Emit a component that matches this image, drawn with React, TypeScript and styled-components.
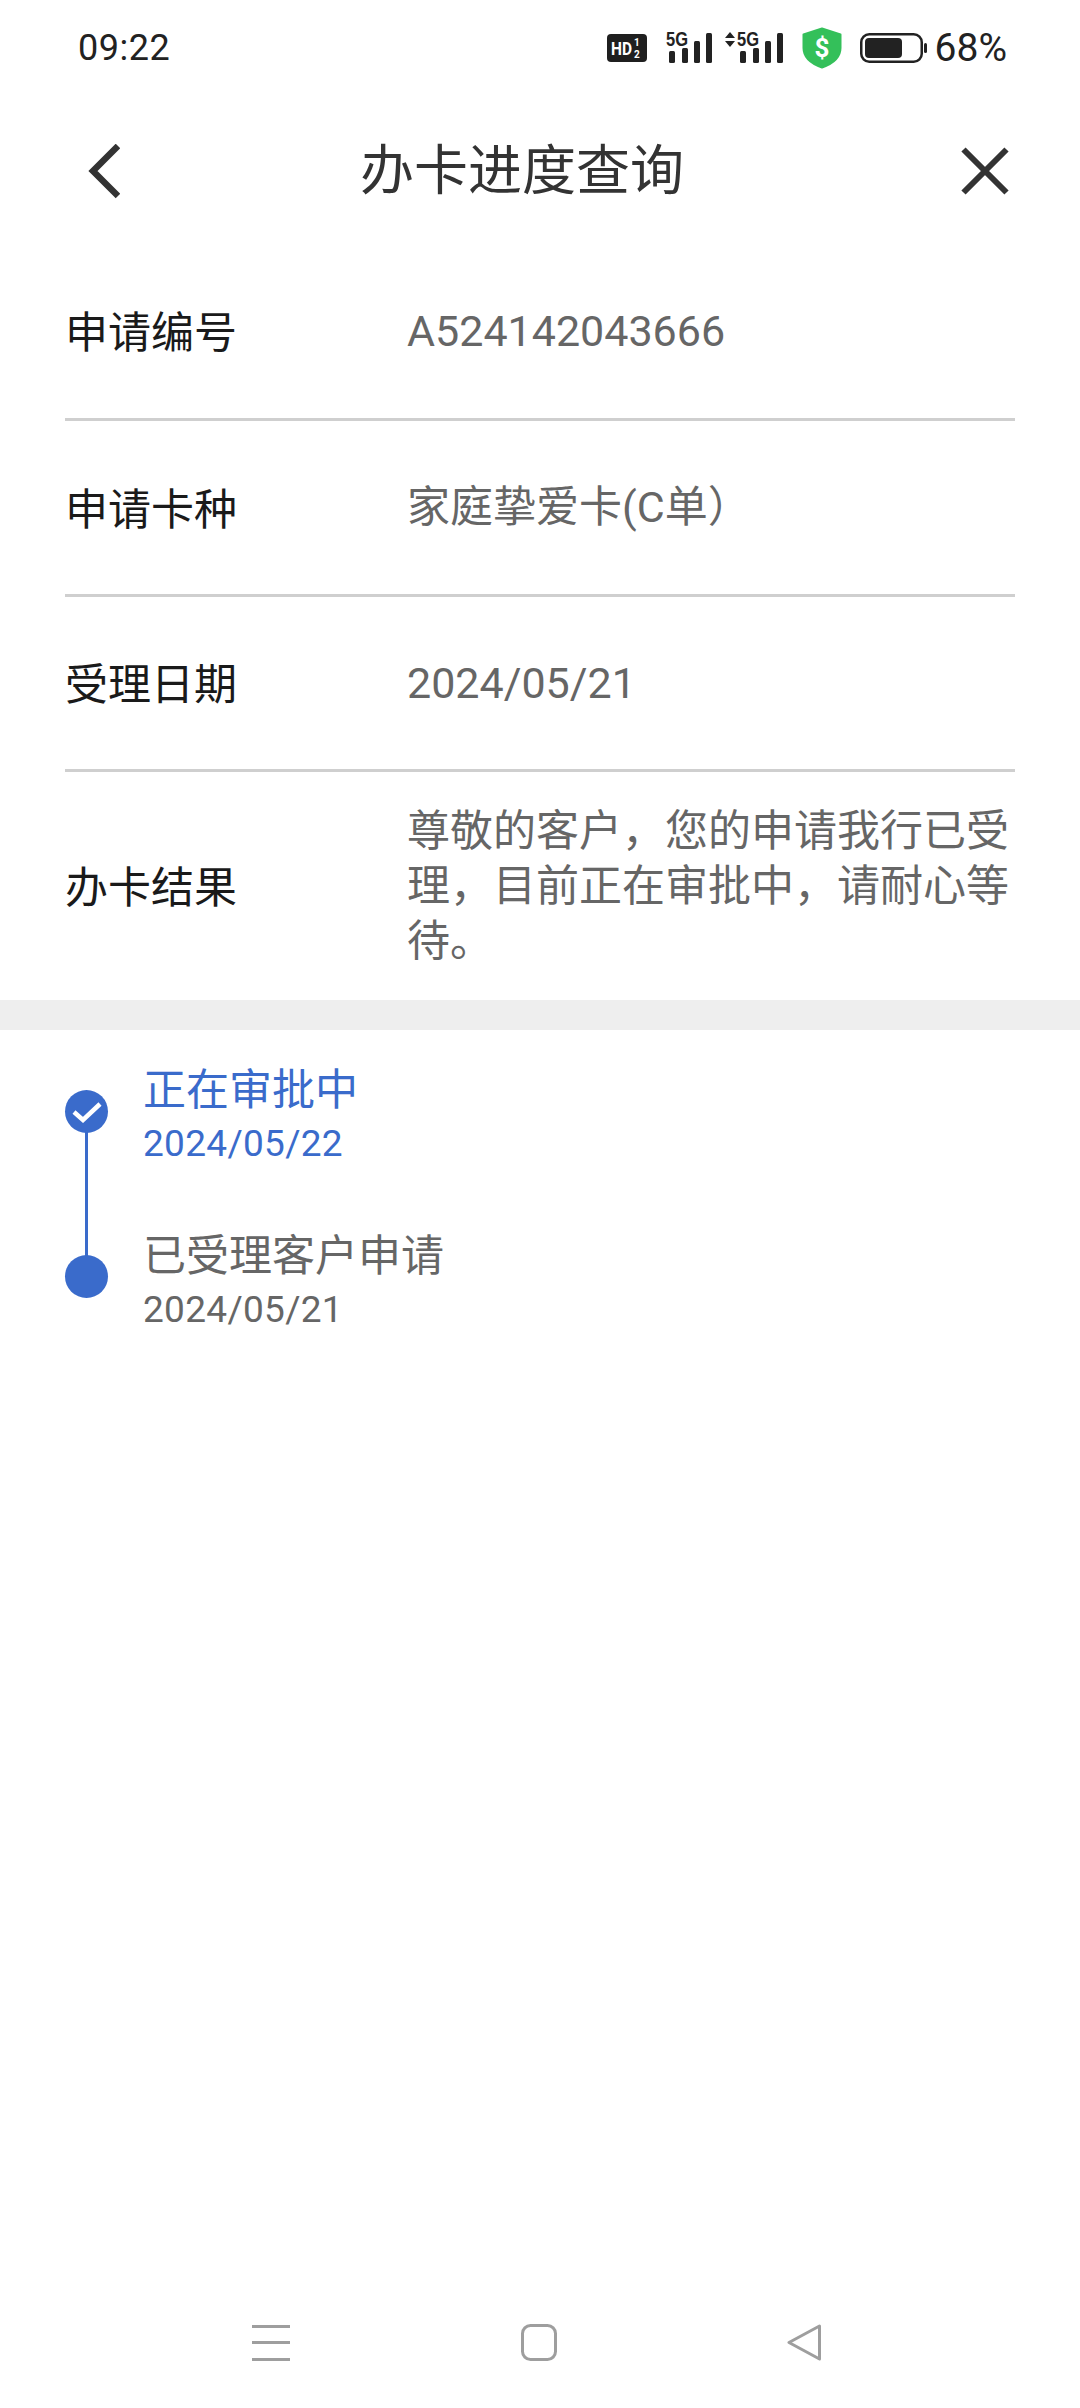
import React from "react";
import styled, { createGlobalStyle } from "styled-components";

const Global = createGlobalStyle`
  html, body { margin: 0; padding: 0; background: #fff; }
  body { font-family: Roboto, "Noto Sans CJK SC", sans-serif; }
`;

const Screen = styled.div`
  width: 1080px;
  height: 2408px;
  background: #fff;
  display: flex;
  flex-direction: column;
  overflow: hidden;
`;

const StatusBar = styled.div`
  height: 96px;
  padding: 0 73px 0 78px;
  display: flex;
  align-items: center;
  justify-content: space-between;
  box-sizing: border-box;
`;

const Clock = styled.span`
  font-size: 36px;
  color: #222;
  letter-spacing: 0.5px;
`;

const StatusIcons = styled.div`
  display: flex;
  align-items: center;
`;

const StatusText = styled.span`
  font-size: 39px;
  color: #222;
  margin-left: 8px;
`;

const SignalSvg = styled.svg<{ $gap: number }>`
  margin-left: ${(p) => p.$gap}px;
  flex: none;
`;

const ShieldSvg = styled.svg`
  width: 40px;
  height: 42px;
  margin-left: 19px;
  flex: none;
`;

const BatterySvg = styled.svg`
  width: 67px;
  height: 30px;
  margin-left: 18px;
  flex: none;
`;

const NavBar = styled.div`
  height: 148px;
  box-sizing: border-box;
  padding: 4px 71px 0 88px;
  display: flex;
  align-items: center;
`;

const BackIcon = styled.svg`
  width: 32px;
  height: 56px;
  flex: none;
`;

const CloseIcon = styled.svg`
  width: 48px;
  height: 48px;
  flex: none;
  margin: 0 0 3px auto;
`;

const Title = styled.h1`
  margin: 0 0 0 240px;
  font-size: 54px;
  font-weight: 400;
  color: #333;
  line-height: 1;
`;

const Rows = styled.div`
  padding: 0 65px;
`;

const Row = styled.div<{ $h: number; $last?: boolean }>`
  height: ${(p) => p.$h}px;
  box-sizing: border-box;
  display: flex;
  align-items: center;
  border-bottom: ${(p) => (p.$last ? "none" : "3px solid #cfcfcf")};
`;

const Label = styled.div`
  width: 342px;
  flex: none;
  font-size: 43px;
  color: #1a1a1a;
  padding-bottom: 4px;
`;

const Value = styled.div`
  flex: 1;
  font-size: 43px;
  line-height: 55px;
  color: #666;
`;

const Band = styled.div`
  height: 30px;
  background: #eeeeee;
`;

const Timeline = styled.div`
  padding: 1px 65px 0;
  display: flex;
  flex-direction: column;
`;

const Step = styled.div`
  height: 165px;
  display: flex;
`;

const DotColumn = styled.div`
  width: 78px;
  flex: none;
  position: relative;
`;

const Dot = styled.div`
  position: absolute;
  left: 0;
  top: 59px;
  width: 43px;
  height: 43px;
  border-radius: 50%;
  background: #3a6bcb;
  display: flex;
  align-items: center;
  justify-content: center;
  z-index: 1;
`;

const Connector = styled.div`
  position: absolute;
  left: 20px;
  top: 80px;
  width: 3px;
  height: 165px;
  background: #3a6bcb;
`;

const StepBody = styled.div<{ $active?: boolean }>`
  color: ${(p) => (p.$active ? "#3a6bcb" : "#666")};
  padding-top: ${(p) => (p.$active ? 30 : 31)}px;
`;

const StepTitle = styled.div`
  font-size: 43px;
  line-height: 58px;
`;

const StepDate = styled.div`
  font-size: 37px;
  line-height: 50px;
  letter-spacing: 0.3px;
`;

const Spacer = styled.div`
  flex: 1;
`;

const BottomBar = styled.div`
  height: 85px;
  box-sizing: border-box;
  padding-left: 252px;
  display: flex;
  align-items: flex-start;
`;

const BottomIcon = styled.svg<{ $w: number; $ml?: number }>`
  width: ${(p) => p.$w}px;
  height: 40px;
  margin-left: ${(p) => p.$ml ?? 0}px;
  flex: none;
`;

const Ink = "#222";
const BAR_TOPS = [26, 23, 16, 8];
const BAR_XS = [3, 16, 28, 40];

function Signal({ arrows }: { arrows?: boolean }) {
  const width = arrows ? 58 : 46;
  const off = arrows ? 12 : 0;
  return (
    <SignalSvg $gap={arrows ? 13 : 19} width={width} height={46} viewBox={`0 0 ${width} 46`}>
      {arrows && <path d="M0 13 L5 7 L10 13 Z M0 16 L10 16 L5 22 Z" fill={Ink} />}
      <g transform={`translate(${off} 0)`} fill={Ink}>
        <text x="0" y="21" fontSize="20" fontWeight="700" fontFamily="'Liberation Sans',Roboto,sans-serif" textLength="22" lengthAdjust="spacingAndGlyphs">
          5G
        </text>
        {BAR_XS.map((x, i) => (
          <rect key={x} x={x} y={BAR_TOPS[i]} width="6" height={38 - BAR_TOPS[i]} rx="1.5" />
        ))}
      </g>
    </SignalSvg>
  );
}

function HdIcon() {
  return (
    <svg width="40" height="30" viewBox="0 0 40 30">
      <rect width="40" height="28" y="1" rx="4" fill="#1f1f1f" />
      <text x="4" y="22" fontSize="19" fontWeight="700" fill="#fff" fontFamily="Roboto,sans-serif" textLength="21" lengthAdjust="spacingAndGlyphs">
        HD
      </text>
      <text x="27" y="13" fontSize="10" fontWeight="700" fill="#fff" fontFamily="Roboto,sans-serif">1</text>
      <text x="27" y="25" fontSize="10" fontWeight="700" fill="#fff" fontFamily="Roboto,sans-serif">2</text>
    </svg>
  );
}

function Shield() {
  return (
    <ShieldSvg viewBox="0 0 40 42">
      <path d="M20 1.5 L38.5 7.5 V21 C38.5 31 30 37 20 40.5 C10 37 1.5 31 1.5 21 V7.5 Z" fill="#34c05a" stroke="#34c05a" strokeWidth="2" strokeLinejoin="round" />
      <text x="20" y="30" textAnchor="middle" fontSize="26" fontWeight="700" fill="#fff" fontFamily="Roboto,sans-serif">$</text>
    </ShieldSvg>
  );
}

function Battery() {
  return (
    <BatterySvg viewBox="0 0 67 30">
      <rect x="1.25" y="1.25" width="60.5" height="27.5" rx="8" fill="none" stroke={Ink} strokeWidth="2.5" />
      <rect x="5" y="5" width="37" height="20" rx="4" fill={Ink} />
      <rect x="64" y="10" width="3" height="10" rx="1.5" fill={Ink} />
    </BatterySvg>
  );
}

export default function App() {
  return (
    <Screen>
      <Global />
      <StatusBar>
        <Clock>09:22</Clock>
        <StatusIcons>
          <HdIcon />
          <Signal />
          <Signal arrows />
          <Shield />
          <Battery />
          <StatusText>68%</StatusText>
        </StatusIcons>
      </StatusBar>
      <NavBar>
        <BackIcon viewBox="0 0 32 56">
          <path d="M30 2 L5 27 L30 52" fill="none" stroke="#333" strokeWidth="6.5" />
        </BackIcon>
        <Title>办卡进度查询</Title>
        <CloseIcon viewBox="0 0 48 48">
          <path d="M2.5 2.5 L45.5 45.5 M45.5 2.5 L2.5 45.5" fill="none" stroke="#333" strokeWidth="6" />
        </CloseIcon>
      </NavBar>
      <Rows>
        <Row $h={177}>
          <Label>申请编号</Label>
          <Value>A524142043666</Value>
        </Row>
        <Row $h={176}>
          <Label>申请卡种</Label>
          <Value>家庭挚爱卡(C单）</Value>
        </Row>
        <Row $h={175}>
          <Label>受理日期</Label>
          <Value>2024/05/21</Value>
        </Row>
        <Row $h={228} $last>
          <Label>办卡结果</Label>
          <Value>尊敬的客户，您的申请我行已受理，目前正在审批中，请耐心等待。</Value>
        </Row>
      </Rows>
      <Band />
      <Timeline>
        <Step>
          <DotColumn>
            <Connector />
            <Dot>
              <svg width="30" height="22" viewBox="0 0 30 22">
                <path d="M2 11 L11 19 L28 3" fill="none" stroke="#fff" strokeWidth="4.5" />
              </svg>
            </Dot>
          </DotColumn>
          <StepBody $active>
            <StepTitle>正在审批中</StepTitle>
            <StepDate>2024/05/22</StepDate>
          </StepBody>
        </Step>
        <Step>
          <DotColumn>
            <Dot />
          </DotColumn>
          <StepBody>
            <StepTitle>已受理客户申请</StepTitle>
            <StepDate>2024/05/21</StepDate>
          </StepBody>
        </Step>
      </Timeline>
      <Spacer />
      <BottomBar>
        <BottomIcon $w={38} viewBox="0 0 38 40">
          <path d="M0 3.5 H38 M0 19.5 H38 M0 36.5 H38" stroke="#9e9e9e" strokeWidth="3" fill="none" />
        </BottomIcon>
        <BottomIcon $w={36} $ml={231} viewBox="0 0 36 40">
          <rect x="1.5" y="2.5" width="33" height="34" rx="8" stroke="#9e9e9e" strokeWidth="3" fill="none" />
        </BottomIcon>
        <BottomIcon $w={35} $ml={230} viewBox="0 0 35 40">
          <path d="M32.5 3 L2 19.5 L32.5 36 Z" stroke="#9e9e9e" strokeWidth="3" strokeLinejoin="round" fill="none" />
        </BottomIcon>
      </BottomBar>
    </Screen>
  );
}
